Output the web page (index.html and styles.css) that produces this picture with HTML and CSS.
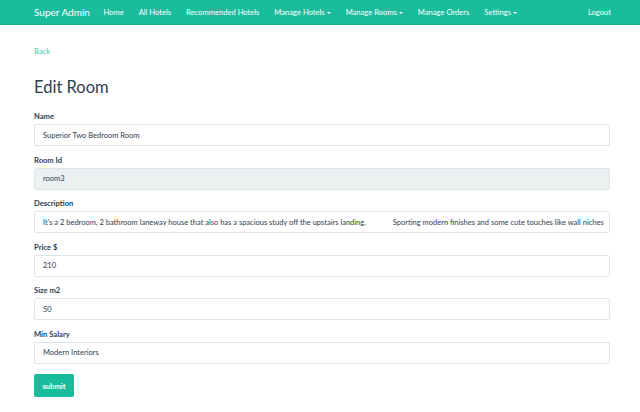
FILE: index.html
```html
<!DOCTYPE html>
<html lang="en">
<head>
  <meta charset="UTF-8" />
  <title>Edit Room</title>
  <link rel="stylesheet" href="styles.css">
</head>
<body>
  <nav class="navbar">
    <a class="brand" href="#">Super Admin</a>
    <ul class="nav">
      <li><a href="#">Home</a></li>
      <li><a href="#">All Hotels</a></li>
      <li><a href="#">Recommended Hotels</a></li>
      <li><a href="#">Manage Hotels<span class="caret"></span></a></li>
      <li><a href="#">Manage Rooms<span class="caret"></span></a></li>
      <li><a href="#">Manage Orders</a></li>
      <li><a href="#">Settings<span class="caret"></span></a></li>
    </ul>
    <a class="logout" href="#">Logout</a>
  </nav>

  <div class="container">
    <a class="back" href="#">Back</a>
    <h1>Edit Room</h1>

    <form>
      <div class="form-group">
        <label>Name</label>
        <input type="text" class="form-control" value="Superior Two Bedroom Room">
      </div>
      <div class="form-group">
        <label>Room Id</label>
        <input type="text" class="form-control" value="room3" readonly>
      </div>
      <div class="form-group">
        <label>Description</label>
        <input type="text" class="form-control" value="It's a 2 bedroom, 2 bathroom laneway house that also has a spacious study off the upstairs landing.              Sporting modern finishes and some cute touches like wall niches">
      </div>
      <div class="form-group">
        <label>Price $</label>
        <input type="text" class="form-control" value="210">
      </div>
      <div class="form-group">
        <label>Size m2</label>
        <input type="text" class="form-control" value="50">
      </div>
      <div class="form-group">
        <label>Min Salary</label>
        <input type="text" class="form-control" value="Modern Interiors">
      </div>
      <button type="submit" class="btn">submit</button>
    </form>
  </div>
</body>
</html>
```

FILE: styles.css
```css
body {
  margin: 0;
  font-family: Lato, 'Open Sans', sans-serif;
  color: #2c3e50;
  background: #fff;
}

a {
  text-decoration: none;
}

.navbar {
  display: flex;
  align-items: center;
  height: 24px;
  padding: 0 29px 0 34px;
  background: #1abc9c;
  border-bottom: 1px solid #17ab8e;
}

.brand {
  color: #fff;
  font-size: 10px;
  margin-right: 6px;
}

.nav {
  display: flex;
  list-style: none;
  margin: 0;
  padding: 0;
  flex: 1;
}

.nav a {
  display: block;
  color: #fff;
  font-size: 7.6px;
  padding: 0 7.5px;
}

.caret {
  display: inline-block;
  margin-left: 2px;
  vertical-align: middle;
  border-top: 2px solid #fff;
  border-left: 2px solid transparent;
  border-right: 2px solid transparent;
}

.logout {
  color: #fff;
  font-size: 7.6px;
}

.container {
  padding: 20px 30px 0 34px;
}

.back {
  display: block;
  color: #3fc9ad;
  font-size: 7.6px;
  margin-top: 1px;
}

h1 {
  font-size: 16.5px;
  font-weight: 400;
  margin: 21px 0 14px;
}

.form-group {
  margin-bottom: 8.6px;
}

label {
  display: block;
  font-size: 7.6px;
  font-weight: 700;
  margin-bottom: 3px;
}

.form-control {
  display: block;
  box-sizing: border-box;
  width: 100%;
  height: 22px;
  padding: 0 5px 0 8px;
  font-family: inherit;
  font-size: 7.5px;
  color: #2c3e50;
  border: 1px solid #dce4ec;
  border-radius: 2px;
  background: #fff;
  white-space: pre;
}

.form-control[readonly] {
  background: #ecf0f1;
}

.btn {
  margin-top: 1px;
  width: 40px;
  height: 23px;
  padding: 0;
  font-family: inherit;
  font-size: 7.6px;
  font-weight: 700;
  color: #fff;
  background: #18bc9c;
  border: none;
  border-radius: 2px;
}
```
